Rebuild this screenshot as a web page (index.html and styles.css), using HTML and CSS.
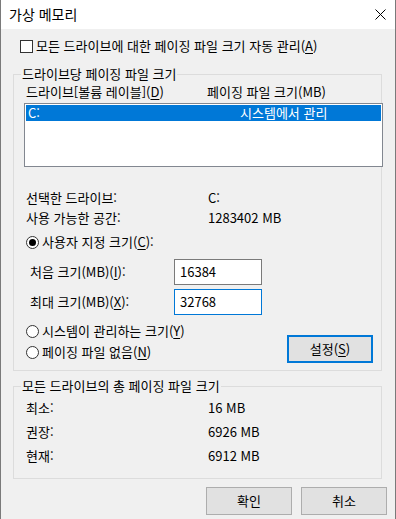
FILE: index.html
```html
<!DOCTYPE html>
<html lang="ko">
<head>
  <meta charset="UTF-8">
  <title>가상 메모리</title>
  <link rel="stylesheet" href="styles.css">
</head>
<body>
  <div class="window">
    <div class="titlebar">
      <span class="title">가상 메모리</span>
      <svg class="close" width="11" height="11" viewBox="0 0 11 11">
        <path d="M0.5 0.5 L10.5 10.5 M10.5 0.5 L0.5 10.5" stroke="#000" stroke-width="1" fill="none"/>
      </svg>
    </div>

    <div class="content">
      <div class="check-row">
        <span class="checkbox"></span>
        <span>모든 드라이브에 대한 페이징 파일 크기 자동 관리(<u>A</u>)</span>
      </div>

      <fieldset class="group">
        <legend>드라이브당 페이징 파일 크기</legend>
        <div class="list-head">
          <span>드라이브[볼륨 레이블](<u>D</u>)</span>
          <span>페이징 파일 크기(MB)</span>
        </div>
        <div class="listbox">
          <div class="list-row selected">
            <span>C:</span>
            <span>시스템에서 관리</span>
          </div>
        </div>

        <div class="info">
          <span>선택한 드라이브:</span><span>C:</span>
          <span>사용 가능한 공간:</span><span>1283402 MB</span>
        </div>

        <div class="radio-row custom">
          <span class="radio checked"></span>
          <span>사용자 지정 크기(<u>C</u>):</span>
        </div>

        <div class="size-row first">
          <span class="size-label">처음 크기(MB)(<u>I</u>):</span>
          <div class="input">16384</div>
        </div>
        <div class="size-row">
          <span class="size-label">최대 크기(MB)(<u>X</u>):</span>
          <div class="input focused">32768</div>
        </div>

        <div class="bottom-row">
          <div class="radios">
            <div class="radio-row">
              <span class="radio"></span>
              <span>시스템이 관리하는 크기(<u>Y</u>)</span>
            </div>
            <div class="radio-row">
              <span class="radio"></span>
              <span>페이징 파일 없음(<u>N</u>)</span>
            </div>
          </div>
          <div class="btn default set-btn">설정(<u>S</u>)</div>
        </div>
      </fieldset>

      <fieldset class="group totals">
        <legend>모든 드라이브의 총 페이징 파일 크기</legend>
        <div class="info total-info">
          <span>최소:</span><span>16 MB</span>
          <span>권장:</span><span>6926 MB</span>
          <span>현재:</span><span>6912 MB</span>
        </div>
      </fieldset>

      <div class="actions">
        <div class="btn">확인</div>
        <div class="btn">취소</div>
      </div>
    </div>
  </div>
</body>
</html>
```

FILE: styles.css
```css
* {
  box-sizing: border-box;
}
body {
  margin: 0;
  font-family: "Noto Sans CJK KR", "Noto Sans", sans-serif;
  font-size: 13px;
  line-height: 16px;
  color: #000;
  background-color: #f0f0f0;
}
u {
  text-decoration: underline;
  text-underline-offset: 2px;
}
.window {
  width: 396px;
  height: 519px;
  border-left: 1px solid #7a7a7a;
  border-right: 1px solid #7a7a7a;
  background-color: #f0f0f0;
  overflow: hidden;
}
.titlebar {
  height: 29px;
  background-color: #ffffff;
  display: flex;
  align-items: center;
  justify-content: space-between;
  padding: 0 9px 2px 8px;
}
.title {
  font-size: 14px;
}
.close {
  margin-top: 2px;
}
.content {
  padding-top: 9px;
}

/* checkbox row */
.check-row {
  display: flex;
  align-items: center;
  height: 16px;
  padding-left: 19px;
}
.checkbox {
  width: 13px;
  height: 13px;
  border: 1px solid #333333;
  background-color: #ffffff;
  margin-right: 3px;
}

/* group boxes */
.group {
  margin: 12px 13px 0 12px;
  padding: 0 0 7px 0;
  border: 1px solid #dcdcdc;
  min-width: 0;
}
.group legend {
  margin-left: 7px;
  padding: 0 1px;
  line-height: 16px;
}
.list-head {
  display: grid;
  grid-template-columns: 181px 1fr;
  margin-top: 2px;
  padding-left: 12px;
}
.listbox {
  margin: 3px -2px 0 10px;
  height: 64px;
  border: 1px solid #828790;
  background-color: #ffffff;
  padding: 1px;
}
.list-row {
  display: grid;
  grid-template-columns: 212px 1fr;
  height: 16px;
  padding-left: 2px;
}
.list-row.selected {
  background-color: #0078d7;
  color: #ffffff;
}
.info {
  display: grid;
  grid-template-columns: 182px 1fr;
  row-gap: 4px;
  margin-top: 23px;
  padding-left: 12px;
}

/* radios */
.radio-row {
  display: flex;
  align-items: center;
  height: 16px;
  padding-left: 12px;
}
.radio-row.custom {
  margin-top: 8px;
}
.radio {
  width: 13px;
  height: 13px;
  border: 1px solid #333333;
  border-radius: 50%;
  background-color: #ffffff;
  margin-right: 3px;
  display: flex;
  align-items: center;
  justify-content: center;
}
.radio.checked::after {
  content: "";
  width: 7px;
  height: 7px;
  border-radius: 50%;
  background-color: #000000;
}

/* size inputs */
.size-row {
  display: flex;
  align-items: center;
  margin-top: 4px;
  padding-left: 16px;
}
.size-row.first {
  margin-top: 9px;
}
.size-label {
  width: 144px;
}
.input {
  width: 88px;
  height: 26px;
  border: 1px solid #7a7a7a;
  background-color: #ffffff;
  padding: 4px 0 0 5px;
}
.input.focused {
  border-color: #0078d7;
}
.bottom-row {
  display: flex;
  justify-content: space-between;
  margin-top: 8px;
}
.radios {
  display: flex;
  flex-direction: column;
  gap: 5px;
}

/* buttons */
.btn {
  width: 86px;
  height: 28px;
  border: 1px solid #adadad;
  background-color: #e1e1e1;
  display: flex;
  align-items: center;
  justify-content: center;
}
.btn.default {
  border: 2px solid #0078d7;
}
.set-btn {
  margin-top: 12px;
  margin-right: 8px;
}
.totals {
  margin-top: 7px;
  padding-bottom: 14px;
}
.total-info {
  margin-top: 6px;
  row-gap: 8px;
}
.actions {
  display: flex;
  justify-content: flex-end;
  gap: 9px;
  margin-top: 8px;
  padding-right: 8px;
}
```
